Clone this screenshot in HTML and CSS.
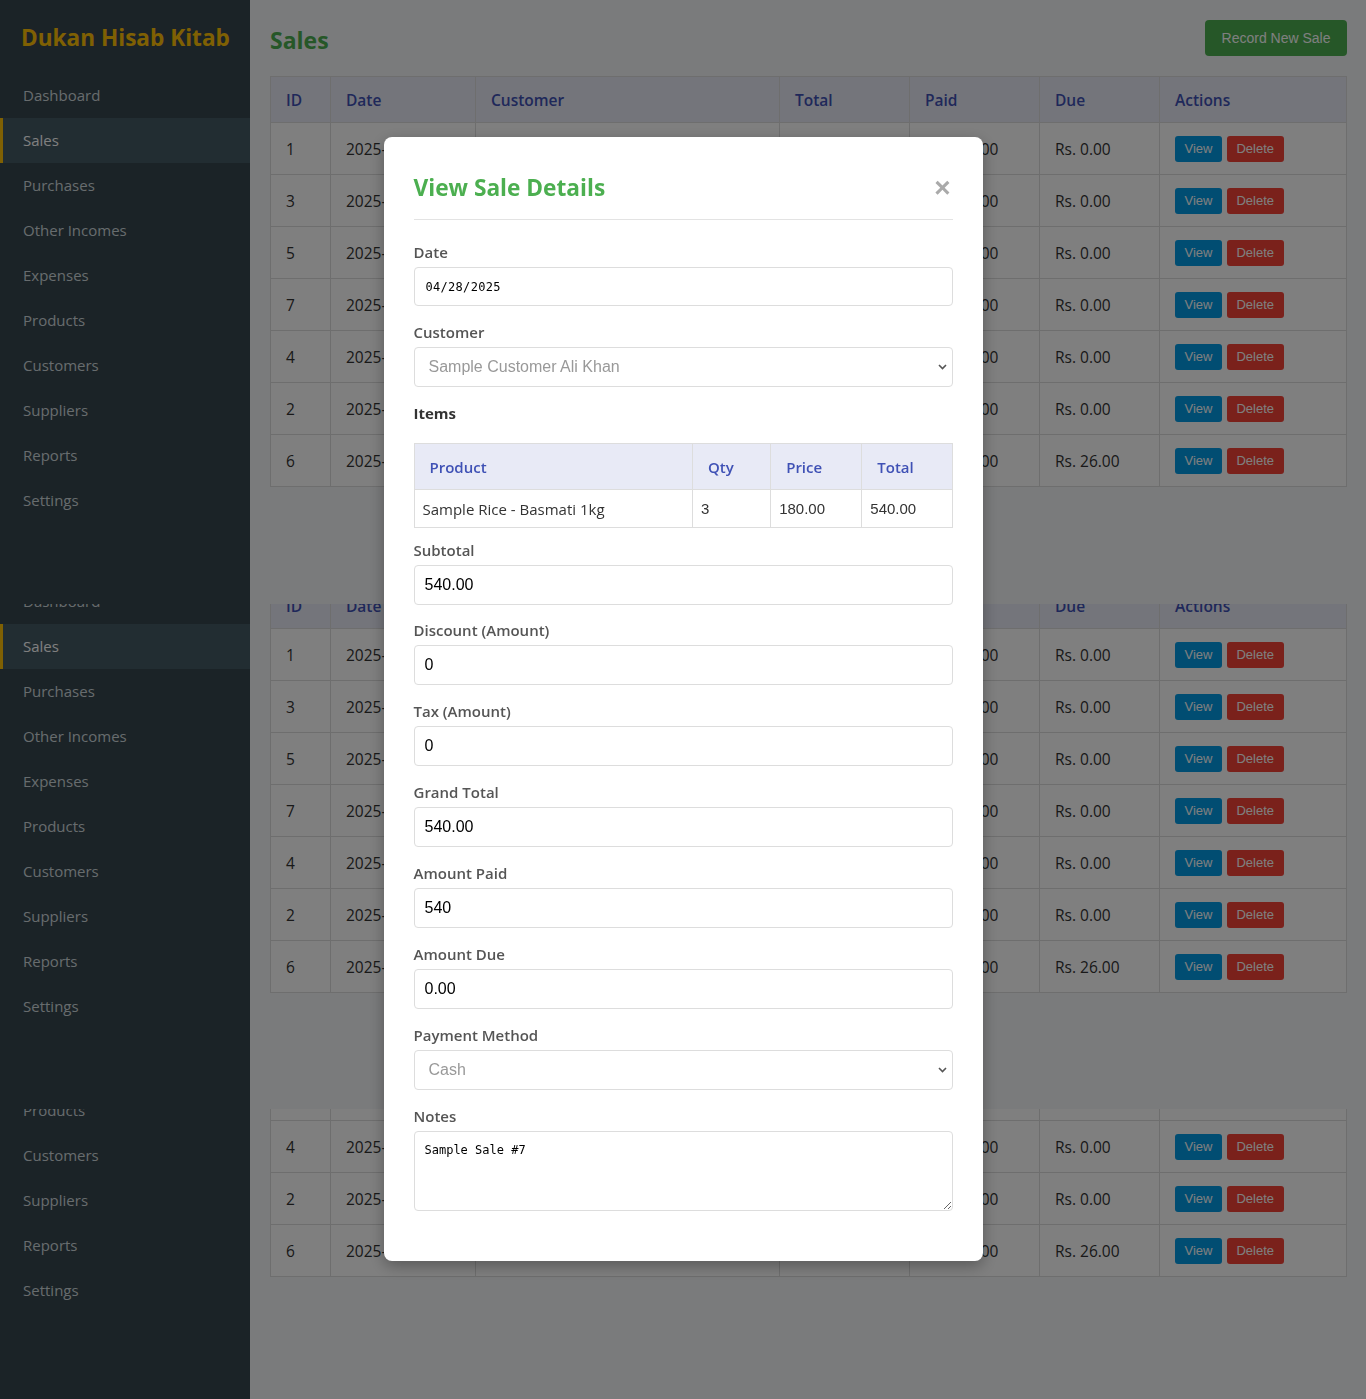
FILE: index.html
```html
<!DOCTYPE html>
<html lang="en">
<head>
<meta charset="utf-8">
<title>Sales - Dukan Hisab Kitab</title>
<link rel="stylesheet" href="styles.css">
</head>
<body>
<div class="screen">
  <div class="slice slice-a">
    <div class="app">
      <aside class="sidebar">
        <div class="brand">Dukan Hisab Kitab</div>
        <nav class="nav">
          <a class="nav-item">Dashboard</a>
          <a class="nav-item active">Sales</a>
          <a class="nav-item">Purchases</a>
          <a class="nav-item">Other Incomes</a>
          <a class="nav-item">Expenses</a>
          <a class="nav-item">Products</a>
          <a class="nav-item">Customers</a>
          <a class="nav-item">Suppliers</a>
          <a class="nav-item">Reports</a>
          <a class="nav-item">Settings</a>
        </nav>
      </aside>
      <main class="main">
        <div class="page-head">
          <h1 class="page-title">Sales</h1>
          <button class="btn btn-green">Record New Sale</button>
        </div>
        <table class="data-table">
          <thead>
            <tr><th class="c-id">ID</th><th class="c-date">Date</th><th class="c-cust">Customer</th><th class="c-total">Total</th><th class="c-paid">Paid</th><th class="c-due">Due</th><th class="c-act">Actions</th></tr>
          </thead>
          <tbody>
            <tr><td>1</td><td>2025-04-20</td><td>Walk-in Customer</td><td>Rs. 450.00</td><td>Rs. 450.00</td><td>Rs. 0.00</td><td><button class="btn btn-sm btn-view">View</button><button class="btn btn-sm btn-del">Delete</button></td></tr>
            <tr><td>3</td><td>2025-04-22</td><td>Sample Customer Ali Khan</td><td>Rs. 360.00</td><td>Rs. 360.00</td><td>Rs. 0.00</td><td><button class="btn btn-sm btn-view">View</button><button class="btn btn-sm btn-del">Delete</button></td></tr>
            <tr><td>5</td><td>2025-04-24</td><td>Walk-in Customer</td><td>Rs. 720.00</td><td>Rs. 720.00</td><td>Rs. 0.00</td><td><button class="btn btn-sm btn-view">View</button><button class="btn btn-sm btn-del">Delete</button></td></tr>
            <tr><td>7</td><td>2025-04-28</td><td>Sample Customer Ali Khan</td><td>Rs. 540.00</td><td>Rs. 540.00</td><td>Rs. 0.00</td><td><button class="btn btn-sm btn-view">View</button><button class="btn btn-sm btn-del">Delete</button></td></tr>
            <tr><td>4</td><td>2025-04-23</td><td>Walk-in Customer</td><td>Rs. 180.00</td><td>Rs. 180.00</td><td>Rs. 0.00</td><td><button class="btn btn-sm btn-view">View</button><button class="btn btn-sm btn-del">Delete</button></td></tr>
            <tr><td>2</td><td>2025-04-21</td><td>Sample Customer Ali Khan</td><td>Rs. 900.00</td><td>Rs. 900.00</td><td>Rs. 0.00</td><td><button class="btn btn-sm btn-view">View</button><button class="btn btn-sm btn-del">Delete</button></td></tr>
            <tr><td>6</td><td>2025-04-25</td><td>Walk-in Customer</td><td>Rs. 326.00</td><td>Rs. 300.00</td><td>Rs. 26.00</td><td><button class="btn btn-sm btn-view">View</button><button class="btn btn-sm btn-del">Delete</button></td></tr>
          </tbody>
        </table>
      </main>
    </div>
  </div>

  <div class="slice slice-b">
    <div class="app">
      <aside class="sidebar">
        <div class="brand">Dukan Hisab Kitab</div>
        <nav class="nav">
          <a class="nav-item">Dashboard</a>
          <a class="nav-item active">Sales</a>
          <a class="nav-item">Purchases</a>
          <a class="nav-item">Other Incomes</a>
          <a class="nav-item">Expenses</a>
          <a class="nav-item">Products</a>
          <a class="nav-item">Customers</a>
          <a class="nav-item">Suppliers</a>
          <a class="nav-item">Reports</a>
          <a class="nav-item">Settings</a>
        </nav>
      </aside>
      <main class="main">
        <div class="page-head">
          <h1 class="page-title">Sales</h1>
          <button class="btn btn-green">Record New Sale</button>
        </div>
        <table class="data-table">
          <thead>
            <tr><th class="c-id">ID</th><th class="c-date">Date</th><th class="c-cust">Customer</th><th class="c-total">Total</th><th class="c-paid">Paid</th><th class="c-due">Due</th><th class="c-act">Actions</th></tr>
          </thead>
          <tbody>
            <tr><td>1</td><td>2025-04-20</td><td>Walk-in Customer</td><td>Rs. 450.00</td><td>Rs. 450.00</td><td>Rs. 0.00</td><td><button class="btn btn-sm btn-view">View</button><button class="btn btn-sm btn-del">Delete</button></td></tr>
            <tr><td>3</td><td>2025-04-22</td><td>Sample Customer Ali Khan</td><td>Rs. 360.00</td><td>Rs. 360.00</td><td>Rs. 0.00</td><td><button class="btn btn-sm btn-view">View</button><button class="btn btn-sm btn-del">Delete</button></td></tr>
            <tr><td>5</td><td>2025-04-24</td><td>Walk-in Customer</td><td>Rs. 720.00</td><td>Rs. 720.00</td><td>Rs. 0.00</td><td><button class="btn btn-sm btn-view">View</button><button class="btn btn-sm btn-del">Delete</button></td></tr>
            <tr><td>7</td><td>2025-04-28</td><td>Sample Customer Ali Khan</td><td>Rs. 540.00</td><td>Rs. 540.00</td><td>Rs. 0.00</td><td><button class="btn btn-sm btn-view">View</button><button class="btn btn-sm btn-del">Delete</button></td></tr>
            <tr><td>4</td><td>2025-04-23</td><td>Walk-in Customer</td><td>Rs. 180.00</td><td>Rs. 180.00</td><td>Rs. 0.00</td><td><button class="btn btn-sm btn-view">View</button><button class="btn btn-sm btn-del">Delete</button></td></tr>
            <tr><td>2</td><td>2025-04-21</td><td>Sample Customer Ali Khan</td><td>Rs. 900.00</td><td>Rs. 900.00</td><td>Rs. 0.00</td><td><button class="btn btn-sm btn-view">View</button><button class="btn btn-sm btn-del">Delete</button></td></tr>
            <tr><td>6</td><td>2025-04-25</td><td>Walk-in Customer</td><td>Rs. 326.00</td><td>Rs. 300.00</td><td>Rs. 26.00</td><td><button class="btn btn-sm btn-view">View</button><button class="btn btn-sm btn-del">Delete</button></td></tr>
          </tbody>
        </table>
      </main>
    </div>
  </div>

  <div class="slice slice-c">
    <div class="app">
      <aside class="sidebar">
        <div class="brand">Dukan Hisab Kitab</div>
        <nav class="nav">
          <a class="nav-item">Dashboard</a>
          <a class="nav-item active">Sales</a>
          <a class="nav-item">Purchases</a>
          <a class="nav-item">Other Incomes</a>
          <a class="nav-item">Expenses</a>
          <a class="nav-item">Products</a>
          <a class="nav-item">Customers</a>
          <a class="nav-item">Suppliers</a>
          <a class="nav-item">Reports</a>
          <a class="nav-item">Settings</a>
        </nav>
      </aside>
      <main class="main">
        <div class="page-head">
          <h1 class="page-title">Sales</h1>
          <button class="btn btn-green">Record New Sale</button>
        </div>
        <table class="data-table">
          <thead>
            <tr><th class="c-id">ID</th><th class="c-date">Date</th><th class="c-cust">Customer</th><th class="c-total">Total</th><th class="c-paid">Paid</th><th class="c-due">Due</th><th class="c-act">Actions</th></tr>
          </thead>
          <tbody>
            <tr><td>1</td><td>2025-04-20</td><td>Walk-in Customer</td><td>Rs. 450.00</td><td>Rs. 450.00</td><td>Rs. 0.00</td><td><button class="btn btn-sm btn-view">View</button><button class="btn btn-sm btn-del">Delete</button></td></tr>
            <tr><td>3</td><td>2025-04-22</td><td>Sample Customer Ali Khan</td><td>Rs. 360.00</td><td>Rs. 360.00</td><td>Rs. 0.00</td><td><button class="btn btn-sm btn-view">View</button><button class="btn btn-sm btn-del">Delete</button></td></tr>
            <tr><td>5</td><td>2025-04-24</td><td>Walk-in Customer</td><td>Rs. 720.00</td><td>Rs. 720.00</td><td>Rs. 0.00</td><td><button class="btn btn-sm btn-view">View</button><button class="btn btn-sm btn-del">Delete</button></td></tr>
            <tr><td>7</td><td>2025-04-28</td><td>Sample Customer Ali Khan</td><td>Rs. 540.00</td><td>Rs. 540.00</td><td>Rs. 0.00</td><td><button class="btn btn-sm btn-view">View</button><button class="btn btn-sm btn-del">Delete</button></td></tr>
            <tr><td>4</td><td>2025-04-23</td><td>Walk-in Customer</td><td>Rs. 180.00</td><td>Rs. 180.00</td><td>Rs. 0.00</td><td><button class="btn btn-sm btn-view">View</button><button class="btn btn-sm btn-del">Delete</button></td></tr>
            <tr><td>2</td><td>2025-04-21</td><td>Sample Customer Ali Khan</td><td>Rs. 900.00</td><td>Rs. 900.00</td><td>Rs. 0.00</td><td><button class="btn btn-sm btn-view">View</button><button class="btn btn-sm btn-del">Delete</button></td></tr>
            <tr><td>6</td><td>2025-04-25</td><td>Walk-in Customer</td><td>Rs. 326.00</td><td>Rs. 300.00</td><td>Rs. 26.00</td><td><button class="btn btn-sm btn-view">View</button><button class="btn btn-sm btn-del">Delete</button></td></tr>
          </tbody>
        </table>
      </main>
    </div>
  </div>
</div>

<div class="overlay">
  <div class="modal">
    <div class="modal-head">
      <h2 class="modal-title">View Sale Details</h2>
      <span class="close">&times;</span>
    </div>

    <div class="field">
      <label class="field-label">Date</label>
      <input class="control control-date" type="text" value="04/28/2025" readonly>
    </div>

    <div class="field">
      <label class="field-label">Customer</label>
      <div class="control control-select">
        <span>Sample Customer Ali Khan</span>
        <svg class="chev" width="9" height="6" viewBox="0 0 9 6"><polyline points="1,1 4.5,4.5 8,1" fill="none" stroke="#555" stroke-width="1.6"/></svg>
      </div>
    </div>

    <h3 class="items-label">Items</h3>
    <table class="items-table">
      <thead>
        <tr><th class="i-prod">Product</th><th class="i-qty">Qty</th><th class="i-price">Price</th><th class="i-total">Total</th></tr>
      </thead>
      <tbody>
        <tr><td>Sample Rice - Basmati 1kg</td><td class="num">3</td><td class="num">180.00</td><td class="num">540.00</td></tr>
      </tbody>
    </table>

    <div class="field field-tight">
      <label class="field-label">Subtotal</label>
      <input class="control" type="text" value="540.00" readonly>
    </div>
    <div class="field">
      <label class="field-label">Discount (Amount)</label>
      <input class="control" type="text" value="0" readonly>
    </div>
    <div class="field">
      <label class="field-label">Tax (Amount)</label>
      <input class="control" type="text" value="0" readonly>
    </div>
    <div class="field">
      <label class="field-label">Grand Total</label>
      <input class="control" type="text" value="540.00" readonly>
    </div>
    <div class="field">
      <label class="field-label">Amount Paid</label>
      <input class="control" type="text" value="540" readonly>
    </div>
    <div class="field">
      <label class="field-label">Amount Due</label>
      <input class="control" type="text" value="0.00" readonly>
    </div>
    <div class="field">
      <label class="field-label">Payment Method</label>
      <div class="control control-select">
        <span>Cash</span>
        <svg class="chev" width="9" height="6" viewBox="0 0 9 6"><polyline points="1,1 4.5,4.5 8,1" fill="none" stroke="#555" stroke-width="1.6"/></svg>
      </div>
    </div>
    <div class="field">
      <label class="field-label">Notes</label>
      <textarea class="control control-textarea" readonly>Sample Sale #7</textarea>
    </div>
  </div>
</div>
</body>
</html>
```

FILE: styles.css
```css
* { box-sizing: border-box; }

html, body {
  margin: 0;
  height: 1399px;
  overflow: hidden;
}

body {
  font-family: "Open Sans", "Noto Sans", sans-serif;
  color: #333;
  background: #f5f6f8;
}

/* stacked page slices */
.slice { overflow: hidden; }
.slice-a { height: 604px; }
.slice-b { height: 505px; }
.slice-c { height: 290px; }
.slice-b .app { margin-top: -98px; }
.slice-c .app { margin-top: -319px; }

.app {
  display: flex;
  height: 640px;
}

/* sidebar */
.sidebar {
  width: 250px;
  flex: none;
  background: #37474f;
}
.brand {
  padding: 20px 0 17px 21px;
  font-size: 22.6px;
  line-height: 36px;
  font-weight: 700;
  color: #ffc107;
  white-space: nowrap;
}
.nav {
  display: flex;
  flex-direction: column;
}
.nav-item {
  display: block;
  padding: 12px 20px;
  border-left: 3px solid transparent;
  font-size: 15px;
  line-height: 21px;
  color: #cfd8dc;
  text-decoration: none;
}
.nav-item.active {
  background: #455a64;
  border-left-color: #ffc107;
  color: #fff;
}

/* main */
.main {
  flex: 1;
  padding: 20px;
  background: #f5f6f8;
}
.page-head {
  display: flex;
  justify-content: space-between;
  align-items: center;
  height: 36px;
  margin-bottom: 20px;
}
.page-title {
  margin: 0;
  padding-top: 4px;
  font-size: 23px;
  line-height: 36px;
  font-weight: 700;
  color: #4caf50;
}

.btn {
  border: 0;
  color: #fff;
  font-family: "Liberation Sans", Arial, sans-serif;
  cursor: pointer;
}
.btn-green {
  height: 36px;
  padding: 0 16.5px;
  font-size: 14px;
  border-radius: 4px;
  background: #4caf50;
}
.btn-sm {
  height: 26px;
  padding: 0 9.5px;
  font-size: 13px;
  border-radius: 3px;
  vertical-align: middle;
}
.btn-view { background: #039be5; margin-right: 5px; }
.btn-del { background: #f44336; }

.data-table {
  width: 100%;
  border-collapse: collapse;
  table-layout: fixed;
  background: #fff;
}
.data-table th,
.data-table td {
  border: 1px solid #ddd;
  padding: 0 15px;
  text-align: left;
  font-size: 15.5px;
  white-space: nowrap;
  overflow: hidden;
}
.data-table th {
  height: 46px;
  background: #e8eaf6;
  color: #3f51b5;
  font-weight: 600;
}
.data-table td { height: 52px; }
.c-id { width: 60px; }
.c-date { width: 145px; }
.c-cust { width: 304px; }
.c-total { width: 130px; }
.c-paid { width: 130px; }
.c-due { width: 120px; }
.c-act { width: 187px; }

/* modal */
.overlay {
  position: fixed;
  inset: 0;
  background: rgba(0, 0, 0, 0.5);
  display: flex;
  align-items: flex-start;
  justify-content: center;
}
.modal {
  width: 599px;
  margin-top: 137px;
  background: #fff;
  border-radius: 8px;
  padding: 30px 30px 34px;
  box-shadow: 0 5px 15px rgba(0, 0, 0, 0.3);
}
.modal-head {
  display: flex;
  justify-content: space-between;
  align-items: center;
  padding-bottom: 10px;
  border-bottom: 1px solid #e3e3e3;
  margin-bottom: 22px;
}
.modal-title {
  margin: 0;
  font-size: 22.7px;
  line-height: 42px;
  font-weight: 700;
  color: #4caf50;
}
.close {
  font-family: "Liberation Sans", Arial, sans-serif;
  font-size: 28px;
  font-weight: 700;
  line-height: 1;
  color: #aaa;
  margin-right: 2px;
}

.field { margin-bottom: 16px; }
.field-tight { margin-bottom: 15px; }
.field-label {
  display: block;
  font-size: 15px;
  line-height: 20px;
  font-weight: 600;
  color: #555;
  margin-bottom: 5px;
}
.control {
  display: block;
  width: 100%;
  height: 40px;
  margin: 0;
  border: 1px solid #ddd;
  border-radius: 4px;
  padding: 0 10px;
  font-family: "Liberation Sans", Arial, sans-serif;
  font-size: 16px;
  color: #000;
  background: #fff;
  outline: none;
}
.control-date {
  height: 39px;
  padding: 0 11px;
  font-family: "DejaVu Sans Mono", monospace;
  font-size: 12px;
  letter-spacing: 0.3px;
}
.control-select {
  display: flex;
  align-items: center;
  justify-content: space-between;
  padding: 0 5px 0 14px;
  color: #999;
}
.chev { display: block; }
.control-textarea {
  height: 80px;
  padding: 11px 10px;
  font-family: "DejaVu Sans Mono", monospace;
  font-size: 12px;
  line-height: 15px;
  resize: vertical;
}

.items-label {
  margin: 1px 0 20px;
  font-size: 15px;
  line-height: 20px;
  font-weight: 700;
  color: #333;
}
.items-table {
  width: 100%;
  border-collapse: collapse;
  table-layout: fixed;
  margin-bottom: 12px;
}
.items-table th,
.items-table td {
  border: 1px solid #ddd;
  text-align: left;
}
.items-table th {
  height: 46px;
  padding: 0 15px;
  background: #e8eaf6;
  color: #3f51b5;
  font-size: 15px;
  font-weight: 600;
}
.items-table td {
  height: 38px;
  padding: 0 8px;
  font-size: 15px;
  color: #333;
}
.items-table td.num {
  font-family: "Liberation Sans", Arial, sans-serif;
}
.i-prod { width: 278px; }
.i-qty { width: 78px; }
.i-price { width: 91px; }
.i-total { width: 90px; }
```
